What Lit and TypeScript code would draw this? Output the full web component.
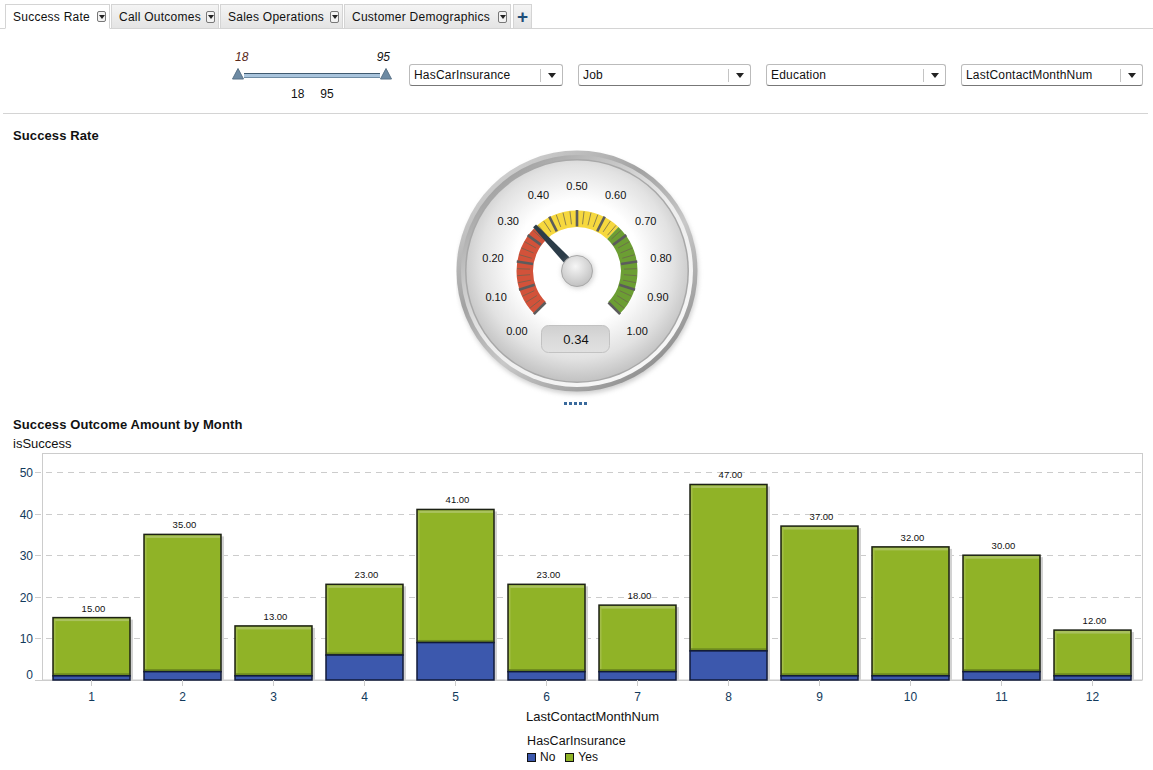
import { LitElement, html, svg, css } from 'lit';
import { customElement } from 'lit/decorators.js';

const TABS = [
  { label: 'Success Rate', width: 105, active: true },
  { label: 'Call Outcomes', width: 108 },
  { label: 'Sales Operations', width: 123 },
  { label: 'Customer Demographics', width: 167 },
];
const DROPDOWNS = [
  { label: 'HasCarInsurance', width: 154 },
  { label: 'Job', width: 173 },
  { label: 'Education', width: 180 },
  { label: 'LastContactMonthNum', width: 182 },
];
// [no, total] per month
const MONTHS = [[1, 15], [2, 35], [1, 13], [6, 23], [9, 41], [2, 23], [2, 18], [7, 47], [1, 37], [1, 32], [2, 30], [1, 12]];

const CX = 121;
const CY = 121;
const polar = (v: number, r: number) => {
  const a = ((v * 270 - 135) * Math.PI) / 180;
  return [CX + r * Math.sin(a), CY - r * Math.cos(a)];
};
const band = (from: number, to: number, r0: number, r1: number) => {
  const [ax, ay] = polar(from, r1);
  const [bx, by] = polar(to, r1);
  const [cx, cy] = polar(to, r0);
  const [dx, dy] = polar(from, r0);
  const large = (to - from) * 270 > 180 ? 1 : 0;
  return `M${ax} ${ay}A${r1} ${r1} 0 ${large} 1 ${bx} ${by}L${cx} ${cy}A${r0} ${r0} 0 ${large} 0 ${dx} ${dy}Z`;
};

const gaugeTicks = () => {
  const out = [];
  for (let i = 0; i <= 40; i++) {
    const v = i / 40;
    const major = i % 4 === 0;
    const [x0, y0] = polar(v, major ? 44.5 : 47);
    const [x1, y1] = polar(v, major ? 61 : 60);
    out.push(svg`<line x1=${x0} y1=${y0} x2=${x1} y2=${y1} stroke=${major ? '#5c5c5c' : '#6b6450'} stroke-width=${major ? 2.6 : 1} opacity=${major ? 1 : 0.75}></line>`);
  }
  return out;
};

const gaugeLabels = () => {
  const out = [];
  for (let i = 0; i <= 10; i++) {
    const [x, y] = polar(i / 10, 85);
    out.push(svg`<text class="g-label" x=${x} y=${y + 4} text-anchor="middle">${(i / 10).toFixed(2)}</text>`);
  }
  return out;
};

const gauge = () => {
  const [tx, ty] = polar(0.34, 62);
  // needle tapers from tip to the hub, offset across its own direction
  const a = ((0.34 * 270 - 135) * Math.PI) / 180;
  const nx = Math.cos(a);
  const ny = Math.sin(a);
  const tip = 2;
  const base = 4.5;
  return html`<svg width="250" height="250" viewBox="0 0 250 250">
    <defs>
      <linearGradient id="rimA" x1="0.15" y1="0.05" x2="0.85" y2="0.95">
        <stop offset="0" stop-color="#d6d6d6"></stop>
        <stop offset="0.35" stop-color="#a2a2a2"></stop>
        <stop offset="0.6" stop-color="#c8c8c8"></stop>
        <stop offset="1" stop-color="#8a8a8a"></stop>
      </linearGradient>
      <linearGradient id="rimB" x1="0.15" y1="0.05" x2="0.85" y2="0.95">
        <stop offset="0" stop-color="#9a9a9a"></stop>
        <stop offset="0.5" stop-color="#ededed"></stop>
        <stop offset="1" stop-color="#f8f8f8"></stop>
      </linearGradient>
      <radialGradient id="face" cx="0.5" cy="0.46" r="0.56">
        <stop offset="0" stop-color="#fff"></stop>
        <stop offset="0.5" stop-color="#fff"></stop>
        <stop offset="0.78" stop-color="#e2e2e2"></stop>
        <stop offset="1" stop-color="#bcbcbc"></stop>
      </radialGradient>
      <radialGradient id="hub" cx="0.45" cy="0.35" r="0.7">
        <stop offset="0" stop-color="#f6f6f6"></stop>
        <stop offset="1" stop-color="#bdbdbd"></stop>
      </radialGradient>
      <linearGradient id="box" x1="0" y1="0" x2="0" y2="1">
        <stop offset="0" stop-color="#cfcfcf"></stop>
        <stop offset="0.5" stop-color="#dadada"></stop>
        <stop offset="1" stop-color="#e0e0e0"></stop>
      </linearGradient>
      <filter id="soft" x="-20%" y="-20%" width="140%" height="140%">
        <feGaussianBlur stdDeviation="2.5"></feGaussianBlur>
      </filter>
    </defs>
    <circle cx=${CX + 1} cy=${CY + 3} r="120" fill="#999" opacity="0.5" filter="url(#soft)"></circle>
    <circle cx=${CX} cy=${CY} r="120.5" fill="url(#rimA)"></circle>
    <circle cx=${CX} cy=${CY} r="116" fill="url(#rimB)"></circle>
    <circle cx=${CX} cy=${CY} r="112" fill="#a8a8a8"></circle>
    <circle cx=${CX} cy=${CY} r="110.5" fill="url(#face)"></circle>
    <path d=${band(0, 1 / 3, 44, 60.5)} fill="#d2523a"></path>
    <path d=${band(1 / 3, 0.66, 44, 60.5)} fill="#f6d83e"></path>
    <path d=${band(0.66, 1, 44, 60.5)} fill="#6c9e33"></path>
    ${gaugeTicks()}
    ${gaugeLabels()}
    <polygon points="${tx - tip * nx},${ty - tip * ny} ${tx + tip * nx},${ty + tip * ny} ${CX + base * nx},${CY + base * ny} ${CX - base * nx},${CY - base * ny}" fill="#2c3c48"></polygon>
    <circle cx=${CX + 1} cy=${CY + 1} r="16.5" fill="#aaa" opacity="0.5" filter="url(#soft)"></circle>
    <circle cx=${CX} cy=${CY} r="15.5" fill="url(#hub)" stroke="#a9a9a9"></circle>
    <rect x="85.5" y="175.5" width="68" height="27" rx="7" fill="url(#box)" stroke="#c2c2c2"></rect>
    <text class="g-value" x="120" y="194" text-anchor="middle">0.34</text>
  </svg>`;
};

const X0 = 91.5;
const STEP = 91;
const Y0 = 230; // svg y of value 0
const UNIT = 4.16;

const chartBar = (no: number, total: number, i: number) => {
  const x = X0 + STEP * i - 38.5;
  const yTop = Y0 - total * UNIT;
  const yNo = Y0 - no * UNIT;
  return svg`
    <rect x=${x + 3} y=${yTop + 2} width="77" height=${Y0 - yTop - 2} fill="#d2d2d2"></rect>
    <rect x=${x} y=${yTop} width="77" height=${yNo - yTop} fill="#90b327"></rect>
    <rect x=${x + 1} y=${yTop + 1} width="75" height="2.5" fill="#aac25e"></rect>
    <rect x=${x + 1} y=${yTop + 1} width="1.5" height=${yNo - yTop - 2} fill="#a2bd48"></rect>
    <rect x=${x + 1} y=${yNo - 2.6} width="75" height="2" fill="#6d8a20"></rect>
    <rect x=${x} y=${yTop} width="77" height=${yNo - yTop} fill="none" stroke="#1c2114" stroke-width="1.5"></rect>
    <rect x=${x} y=${yNo} width="77" height=${Y0 - yNo} fill="#3c58ad" stroke="#101a3a" stroke-width="1.5"></rect>
    <text class="c-value" x=${x + 40.5} y=${yTop - 6} text-anchor="middle">${total.toFixed(2)}</text>
    <line x1=${x + 38.5} y1=${Y0} x2=${x + 38.5} y2=${Y0 + 6} stroke="#ccc"></line>
    <text class="c-axis" x=${x + 38.5} y=${Y0 + 21} text-anchor="middle">${i + 1}</text>`;
};

const chart = () => {
  const rows = [10, 20, 30, 40, 50];
  return html`<svg width="1153" height="285" viewBox="0 0 1153 285">
    <rect x="42.5" y="3.5" width="1100" height="226.5" fill="#fff" stroke="#ccc"></rect>
    ${rows.map((v) => {
      const y = Math.round(Y0 - v * UNIT) + 0.5;
      return svg`<line x1="35" y1=${y} x2="1142" y2=${y} stroke="#ccc" stroke-dasharray="6 5"></line>
        <text class="c-axis" x="33" y=${y + 4} text-anchor="end">${v}</text>`;
    })}
    <line x1="35" y1=${Y0 + 0.5} x2="1142" y2=${Y0 + 0.5} stroke="#ccc"></line>
    <text class="c-axis" x="33" y="229" text-anchor="end">0</text>
    ${MONTHS.map(([no, total], i) => chartBar(no, total, i))}
    <text class="c-title" x="592.5" y="271" text-anchor="middle">LastContactMonthNum</text>
  </svg>`;
};

@customElement('app-root')
export class AppRoot extends LitElement {
  static styles = css`
    :host {
      display: block;
      width: 1153px;
      height: 770px;
      overflow: hidden;
      background: #fff;
      color: #111;
      font-family: "Liberation Sans", Arial, sans-serif;
      font-size: 12px;
    }
    svg {
      display: block;
    }
    .tabs {
      display: flex;
      gap: 1px;
      height: 24px;
      margin-top: 4px;
      padding-left: 5px;
      border-bottom: 1px solid #d4d4d4;
    }
    .tab {
      box-sizing: border-box;
      height: 25px;
      display: flex;
      align-items: center;
      justify-content: space-between;
      padding: 0 3px 0 7px;
      background: linear-gradient(#f4f4f4, #e4e4e4);
      border: 1px solid #d4d4d4;
      letter-spacing: 0.25px;
    }
    .tab.active {
      background: #fff;
      border-bottom-color: #fff;
    }
    .menu {
      box-sizing: border-box;
      width: 9px;
      height: 12px;
      border: 1px solid #777;
      border-radius: 2px;
      background: #f2f2f2;
      display: flex;
      justify-content: center;
      padding-top: 3px;
    }
    .tab.active .menu {
      height: 11px;
    }
    .menu i {
      width: 0;
      height: 0;
      border: 3px solid transparent;
      border-top: 4px solid #222;
      border-bottom: 0;
    }
    .plus {
      box-sizing: border-box;
      width: 19px;
      height: 25px;
      margin-left: 1px;
      border: 1px solid #d4d4d4;
      background: linear-gradient(#f4f4f4, #e4e4e4);
      color: #1f4e79;
      font-size: 19px;
      font-weight: bold;
      line-height: 23px;
      text-align: center;
    }
    .filters {
      display: flex;
      height: 85px;
      padding-left: 229px;
      margin: 0 5px 0 3px;
      border-bottom: 1px solid #d4d4d4;
      box-sizing: border-box;
      width: 1145px;
    }
    .slider {
      width: 160px;
      margin-right: 17px;
      flex: none;
      padding-top: 21px;
      box-sizing: border-box;
    }
    .ends {
      display: flex;
      justify-content: space-between;
      padding: 0 2px 0 3px;
      font-style: italic;
      line-height: 14px;
    }
    .ends b {
      font-weight: normal;
      color: #5a2a1a;
    }
    .track-wrap {
      display: flex;
      align-items: flex-end;
      height: 13px;
      margin-top: 3px;
    }
    .track {
      flex: none;
      width: 136px;
      height: 5px;
      margin-bottom: 2px;
      box-sizing: border-box;
      background: #a9c4dc;
      border-top: 1px solid #3f5a70;
      border-bottom: 1px solid #6f8ca4;
    }
    .thumb {
      flex: none;
      width: 12px;
      height: 12px;
    }
    .range {
      display: flex;
      gap: 16px;
      padding: 7px 0 0 59px;
      line-height: 14px;
    }
    .dropdowns {
      display: flex;
      gap: 15px;
      padding-top: 35px;
    }
    .dropdown {
      box-sizing: border-box;
      height: 22px;
      display: flex;
      align-items: center;
      padding: 0 6px 0 4px;
      border: 1px solid #bbb;
      border-bottom-color: #777;
      border-radius: 3px;
      letter-spacing: 0.2px;
    }
    .dropdown span {
      flex: 1;
    }
    .dropdown em {
      width: 1px;
      height: 13px;
      background: #c4c4c4;
      margin-right: 7px;
    }
    .dropdown i {
      width: 0;
      height: 0;
      border: 4px solid transparent;
      border-top: 5px solid #222;
      border-bottom: 0;
    }
    h2 {
      margin: 0;
      padding-left: 13px;
      font-size: 13px;
      font-weight: bold;
      line-height: 16px;
      letter-spacing: 0.1px;
    }
    .rate {
      margin-top: 14px;
    }
    .gauge {
      display: flex;
      justify-content: center;
      padding-left: 9px;
      margin-top: 6px;
      height: 246px;
    }
    .dots {
      width: 25px;
      height: 3px;
      margin: 6px auto 0;
      background: repeating-linear-gradient(90deg, #3a6a9c 0 3px, transparent 3px 5px);
    }
    .outcome {
      margin-top: 12px;
    }
    .sub {
      padding-left: 13px;
      font-size: 13px;
      line-height: 13px;
      margin-top: 4px;
    }
    .g-label {
      font-size: 11px;
      fill: #111;
    }
    .g-value {
      font-size: 13px;
      fill: #111;
    }
    .c-value {
      font-size: 9.5px;
      fill: #111;
    }
    .c-axis {
      font-size: 12px;
      fill: #123a5c;
    }
    .c-title {
      font-size: 13px;
      fill: #111;
    }
    .legend {
      margin: -1px 0 0 527px;
      line-height: 15px;
    }
    .legend-title {
      font-size: 12.5px;
      letter-spacing: 0.1px;
    }
    .legend-items {
      display: flex;
      gap: 10px;
      margin-top: 1px;
    }
    .legend-item {
      display: flex;
      align-items: center;
      gap: 4px;
    }
    .swatch {
      box-sizing: border-box;
      width: 9px;
      height: 9px;
      border: 1px solid #111;
    }
  `;

  render() {
    return html`
      <div class="tabs">
        ${TABS.map((t) => html`<div class="tab ${t.active ? 'active' : ''}" style="width:${t.width}px">
          <span>${t.label}</span><div class="menu"><i></i></div>
        </div>`)}
        <div class="plus">+</div>
      </div>
      <div class="filters">
        <div class="slider">
          <div class="ends"><b>18</b><span>95</span></div>
          <div class="track-wrap">
            ${this.thumb()}<div class="track"></div>${this.thumb()}
          </div>
          <div class="range"><span>18</span><span>95</span></div>
        </div>
        <div class="dropdowns">
          ${DROPDOWNS.map((d) => html`<div class="dropdown" style="width:${d.width}px">
            <span>${d.label}</span><em></em><i></i>
          </div>`)}
        </div>
      </div>
      <h2 class="rate">Success Rate</h2>
      <div class="gauge">${gauge()}</div>
      <div class="dots"></div>
      <h2 class="outcome">Success Outcome Amount by Month</h2>
      <div class="sub">isSuccess</div>
      ${chart()}
      <div class="legend">
        <div class="legend-title">HasCarInsurance</div>
        <div class="legend-items">
          <div class="legend-item"><div class="swatch" style="background:#3c58ad"></div>No</div>
          <div class="legend-item"><div class="swatch" style="background:#8fb327"></div>Yes</div>
        </div>
      </div>
    `;
  }

  thumb() {
    return html`<svg class="thumb" viewBox="0 0 12 12">
      <polygon points="6,0.5 11.5,11 0.5,11" fill="#6d8aa3" stroke="#5a7388"></polygon>
    </svg>`;
  }
}
